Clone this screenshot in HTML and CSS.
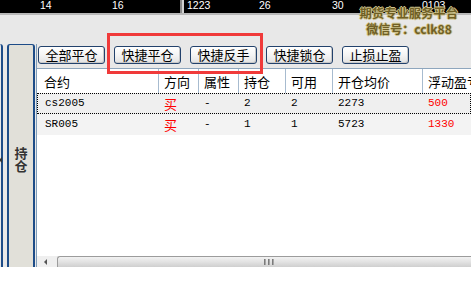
FILE: index.html
```html
<!DOCTYPE html>
<html>
<head>
<meta charset="utf-8">
<link rel="stylesheet" href="styles.css">
</head>
<body>
<div class="app">
  <div class="ticker">
    <span class="tick t1">14</span>
    <span class="tick t2">16</span>
    <span class="divider"></span>
    <span class="tick t3">1223</span>
    <span class="tick t4">26</span>
    <span class="tick t5">30</span>
    <span class="tick t6">0103</span>
  </div>
  <div class="watermark">
    <div class="wm1">期货专业服务平台</div>
    <div class="wm2">微信号：cclk88</div>
  </div>
  <div class="main">
    <div class="side">
      <div class="prev-edge"><span class="mark"></span></div>
      <div class="tab"><span class="tab-label"><span class="tab-ch">持</span><span class="tab-ch">仓</span></span></div>
    </div>
    <div class="panel">
      <div class="toolbar">
        <button class="btn">全部平仓</button>
        <button class="btn">快捷平仓</button>
        <button class="btn">快捷反手</button>
        <button class="btn">快捷锁仓</button>
        <button class="btn">止损止盈</button>
      </div>
      <div class="grid">
        <div class="thead">
          <div class="th first">合约</div>
          <div class="th">方向</div>
          <div class="th">属性</div>
          <div class="th">持仓</div>
          <div class="th">可用</div>
          <div class="th">开仓均价</div>
          <div class="th">浮动盈亏</div>
        </div>
        <div class="row sel">
          <div class="td first num">cs2005</div>
          <div class="td red">买</div>
          <div class="td num">-</div>
          <div class="td num">2</div>
          <div class="td num">2</div>
          <div class="td num">2273</div>
          <div class="td num red">500</div>
        </div>
        <div class="row">
          <div class="td first num">SR005</div>
          <div class="td red">买</div>
          <div class="td num">-</div>
          <div class="td num">1</div>
          <div class="td num">1</div>
          <div class="td num">5723</div>
          <div class="td num red">1330</div>
        </div>
        <div class="filler"></div>
        <div class="hscroll">
          <div class="arrow-btn"><span class="arrow"></span></div>
          <div class="thumb"><span class="grip"></span><span class="grip"></span><span class="grip"></span></div>
        </div>
      </div>
    </div>
  </div>
  <div class="highlight"></div>
</div>
</body>
</html>
```
FILE: styles.css
```css
* { box-sizing: border-box; }
html, body { margin: 0; padding: 0; }
body {
  width: 471px;
  height: 300px;
  overflow: hidden;
  background: #ffffff;
  font-family: "Noto Sans CJK SC", "Noto Sans", sans-serif;
  font-size: 13px;
  color: #000;
}
.app {
  position: relative;
  width: 471px;
  height: 300px;
  overflow: hidden;
}
.ticker {
  position: relative;
  height: 15px;
  background: #000;
  border-bottom: 2px solid #b8b8b8;
}
.tick {
  position: absolute;
  top: -1px;
  color: #fff;
  font-family: "Liberation Sans", sans-serif;
  font-size: 10.5px;
  line-height: 12px;
}
.t1 { left: 40px; }
.t2 { left: 112px; }
.t3 { left: 187px; }
.t4 { left: 259px; }
.t5 { left: 332px; }
.t6 { left: 422px; }
.divider {
  position: absolute;
  left: 180px;
  top: 0;
  width: 4px;
  height: 13px;
  border-left: 2px solid #8a8a8a;
  border-right: 2px solid #d0d0d0;
}
.watermark {
  position: absolute;
  top: 5px;
  left: 352px;
  width: 114px;
  text-align: center;
  font-weight: bold;
  font-size: 12px;
  line-height: 16px;
  color: #6f5f24;
  text-shadow: 1px 0 0 #cfc38f, -1px 0 0 #cfc38f, 0 1px 0 #cfc38f, 0 -1px 0 #cfc38f;
}
.wm1 { letter-spacing: 0.3px; }
.main {
  display: flex;
  height: 252px;
  background: #e8e8e8;
  padding-top: 29px;
}
.side {
  display: flex;
  width: 36px;
  flex: 0 0 36px;
}
.prev-edge {
  position: relative;
  width: 3px;
  border-right: 2px solid #1d4c88;
  border-top-right-radius: 3px;
  background: #e8e8e8;
}
.mark {
  position: absolute;
  left: -1px;
  top: 113px;
  width: 0;
  height: 0;
  border-top: 3px solid transparent;
  border-bottom: 3px solid transparent;
  border-right: 3px solid #333;
}
.tab {
  margin-left: 4px;
  width: 28px;
  background: #e1e0d9;
  border: 2px solid #1d4c88;
  border-bottom: 0;
  border-top-width: 1px;
  border-radius: 3px 3px 0 0;
  display: flex;
  justify-content: center;
  padding-top: 101px;
}
.tab-label {
  display: flex;
  flex-direction: column;
  font-weight: bold;
  font-size: 13px;
  color: #333;
}
.tab-ch {
  display: block;
  height: 13px;
  line-height: 13px;
}
.panel {
  flex: 1;
  display: flex;
  flex-direction: column;
  border-left: 1px solid #7f9db9;
  min-width: 0;
}
.toolbar {
  display: flex;
  gap: 9px;
  height: 24px;
  padding: 2px 0 0 1px;
  align-items: flex-start;
}
.btn {
  width: 67px;
  height: 18px;
  padding: 0;
  margin: 0;
  border: 1px solid #23426c;
  border-radius: 3px;
  background: linear-gradient(#ffffff, #f4f4f4 50%, #e2e2e2);
  font-family: "Noto Sans CJK SC", sans-serif;
  font-size: 13px;
  line-height: 16px;
  color: #000;
  box-shadow: inset -1px -1px 0 #c8c8c8;
}
.grid {
  flex: 1;
  display: flex;
  flex-direction: column;
  background: #fff;
  border-top: 1px solid #8ea6bd;
  overflow: hidden;
}
.thead, .row {
  display: grid;
  grid-template-columns: 121px 40px 40px 47px 47px 90px 1fr;
}
.thead { height: 24px; }
.th {
  border-left: 1px solid #a7bbcf;
  padding-left: 5px;
  line-height: 24px;
  padding-top: 1px;
  white-space: nowrap;
  font-size: 13px;
}
.th.first { border-left: 0; padding-left: 7px; }
.row {
  height: 21px;
  background: #f3f3f3;
}
.row.sel {
  background: #efefef;
  outline: 1px dotted #000;
  outline-offset: -1px;
}
.td {
  padding-left: 6px;
  line-height: 21px;
  white-space: nowrap;
}
.td.first { padding-left: 8px; }
.num {
  font-family: "Liberation Mono", monospace;
  font-size: 11px;
}
.red { color: #f00; }
.filler { flex: 1; }
.hscroll {
  display: flex;
  height: 11px;
  background: #efefef;
  overflow: hidden;
}
.arrow-btn {
  width: 20px;
  flex: 0 0 20px;
  position: relative;
}
.arrow {
  position: absolute;
  left: 7px;
  top: 3px;
  width: 0;
  height: 0;
  border-top: 3px solid transparent;
  border-bottom: 3px solid transparent;
  border-right: 3px solid #555;
}
.thumb {
  flex: 0 0 422px;
  border-top: 1px solid #9c9c9c;
  border-left: 1px solid #9c9c9c;
  border-top-left-radius: 3px;
  background: linear-gradient(#f2f2f2, #e2e2e2 50%, #cfcfcf);
  display: flex;
  justify-content: center;
  align-items: center;
  gap: 2px;
}
.grip {
  width: 2px;
  height: 6px;
  background: linear-gradient(90deg, #666, #bbb);
}
.highlight {
  position: absolute;
  left: 107px;
  top: 33px;
  width: 156px;
  height: 41px;
  border: 3px solid #f03a3a;
}
```
